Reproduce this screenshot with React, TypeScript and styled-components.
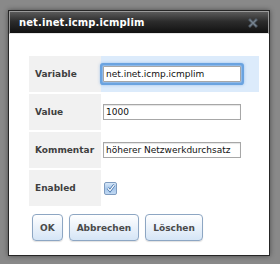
import React from "react"
import styled, { createGlobalStyle } from "styled-components"

const GlobalStyle = createGlobalStyle`
  html, body {
    margin: 0;
    padding: 0;
    background: #898989;
  }
  body {
    font-family: "DejaVu Sans", Verdana, sans-serif;
  }
`

const Page = styled.div`
  width: 280px;
  height: 264px;
  padding: 10px 0 0 8px;
  box-sizing: border-box;
`

const Dialog = styled.div`
  width: 262px;
  height: 246px;
  box-sizing: border-box;
  background: #fff;
  border: 1px solid #262626;
  box-shadow: 0 0 5px rgba(0, 0, 0, 0.45);
  display: flex;
  flex-direction: column;
`

const TitleBar = styled.div`
  height: 23px;
  box-sizing: border-box;
  border: 1px solid #9a9a9a;
  border-bottom: 1px solid #e8e8e8;
  background: linear-gradient(to bottom, #5a5a5a 0%, #2c2c2c 45%, #111 100%);
  display: flex;
  align-items: center;
  justify-content: space-between;
  padding: 0 10px 0 9px;
`

const Title = styled.span`
  color: #fff;
  font-weight: bold;
  font-size: 10px;
  letter-spacing: 0.1px;
`

const CloseIcon = () => (
  <svg width="10" height="10" viewBox="0 0 10 10">
    <path d="M2 2 L8 8 M8 2 L2 8" stroke="#4f5964" strokeWidth="2.8" strokeLinecap="square" />
    <path d="M2 2 L8 8 M8 2 L2 8" stroke="#76838f" strokeWidth="1.2" strokeLinecap="square" />
  </svg>
)

const Content = styled.div`
  padding: 22px 0 0 20px;
  display: flex;
  flex-direction: column;
  gap: 8px;
`

const FormGrid = styled.div`
  display: grid;
  grid-template-columns: 72px 158px;
  grid-auto-rows: 36px;
  row-gap: 2px;
`

const LabelCell = styled.div`
  background: #f1f1f1;
  display: flex;
  align-items: center;
  padding-left: 6px;
  font-size: 9px;
  font-weight: bold;
  color: #3f3f3f;
`

const ValueCell = styled.div<{ $active?: boolean }>`
  background: ${({ $active }) => ($active ? "#dcebfb" : "#fff")};
  display: flex;
  align-items: center;
  padding-left: 2px;
`

const TextInput = styled.input<{ $focus?: boolean }>`
  width: 138px;
  height: 16px;
  box-sizing: border-box;
  border: 1px solid #a7a7a7;
  padding: 0 2px;
  margin: 0;
  font-family: "DejaVu Sans", Verdana, sans-serif;
  font-size: 9px;
  color: #111;
  background: #fff;
  outline: none;
  border-radius: ${({ $focus }) => ($focus ? "1px" : "0")};
  box-shadow: ${({ $focus }) =>
    $focus ? "0 0 0 1px #8fb9e8, 0 0 0 3px #6aa3e0, 0 0 3px 3px rgba(90,150,220,0.5)" : "inset 0 1px 1px #e4e4e4"};
`

const CheckBox = styled.span`
  width: 13px;
  height: 13px;
  box-sizing: border-box;
  margin-left: 1px;
  border: 1px solid #7f9cc0;
  border-radius: 2px;
  background: linear-gradient(to bottom, #d8e8f8 0%, #a8c8ec 50%, #c0d8f2 100%);
  display: flex;
  align-items: center;
  justify-content: center;
`

const ButtonRow = styled.div`
  display: flex;
  gap: 6px;
  padding-left: 3px;
`

const Button = styled.button`
  height: 27px;
  padding: 0 7px;
  border: 1px solid #8da6c3;
  border-radius: 4px;
  background: linear-gradient(to bottom, #ffffff 0%, #eef4fb 40%, #d5e5f6 100%);
  font-family: "DejaVu Sans", Verdana, sans-serif;
  font-size: 9px;
  font-weight: bold;
  color: #4a4a4a;
  box-shadow: 0 1px 1px rgba(0, 0, 0, 0.12);
`

const App = () => {
  return (
    <Page>
      <GlobalStyle />
      <Dialog>
        <TitleBar>
          <Title>net.inet.icmp.icmplim</Title>
          <CloseIcon />
        </TitleBar>
        <Content>
          <FormGrid>
            <LabelCell>Variable</LabelCell>
            <ValueCell $active>
              <TextInput $focus defaultValue="net.inet.icmp.icmplim" />
            </ValueCell>
            <LabelCell>Value</LabelCell>
            <ValueCell>
              <TextInput defaultValue="1000" />
            </ValueCell>
            <LabelCell>Kommentar</LabelCell>
            <ValueCell>
              <TextInput defaultValue="höherer Netzwerkdurchsatz" />
            </ValueCell>
            <LabelCell>Enabled</LabelCell>
            <ValueCell>
              <CheckBox>
                <svg width="10" height="10" viewBox="0 0 10 10">
                  <path d="M1.8 5.2 L4 7.6 L8.4 1.8" fill="none" stroke="#3d6ea8" strokeWidth="2.6" />
                  <path d="M1.8 5.2 L4 7.6 L8.4 1.8" fill="none" stroke="#fff" strokeWidth="1.3" />
                </svg>
              </CheckBox>
            </ValueCell>
          </FormGrid>
          <ButtonRow>
            <Button>OK</Button>
            <Button>Abbrechen</Button>
            <Button>Löschen</Button>
          </ButtonRow>
        </Content>
      </Dialog>
    </Page>
  )
}

export default App
